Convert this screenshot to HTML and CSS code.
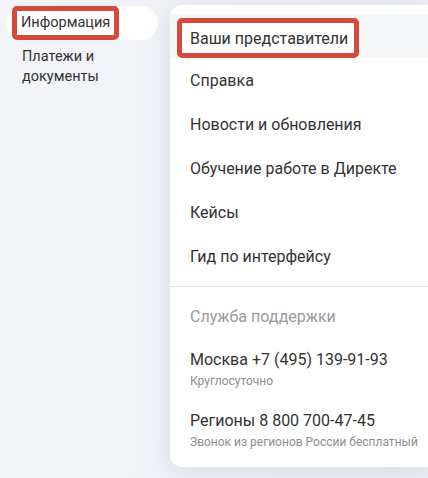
FILE: index.html
```html
<!DOCTYPE html>
<html lang="ru">
<head>
  <meta charset="UTF-8" />
  <title>Информация</title>
  <link rel="stylesheet" href="styles.css">
</head>
<body>
  <div class="page">
    <div class="sidebar">
      <div class="side-item active">
        <span class="mark">Информация</span>
      </div>
      <div class="side-item">Платежи и<br>документы</div>
    </div>

    <div class="menu">
      <div class="menu-list">
        <div class="menu-item current"><span class="mark big">Ваши представители</span></div>
        <div class="menu-item">Справка</div>
        <div class="menu-item">Новости и обновления</div>
        <div class="menu-item">Обучение работе в Директе</div>
        <div class="menu-item">Кейсы</div>
        <div class="menu-item">Гид по интерфейсу</div>
      </div>
      <div class="support">
        <div class="support-title">Служба поддержки</div>
        <div class="phone">
          <div class="phone-main">Москва +7 (495) 139-91-93</div>
          <div class="phone-note">Круглосуточно</div>
        </div>
        <div class="phone">
          <div class="phone-main">Регионы 8 800 700-47-45</div>
          <div class="phone-note">Звонок из регионов России бесплатный</div>
        </div>
      </div>
    </div>
  </div>
</body>
</html>
```

FILE: styles.css
```css
body {
  margin: 0;
  font-family: Roboto, "Noto Sans", sans-serif;
  color: #333;
  background: linear-gradient(90deg, #f3f4f8 0%, #eceff5 100%);
  height: 478px;
  overflow: hidden;
}
.page {
  display: flex;
  align-items: flex-start;
}
.sidebar {
  width: 164px;
  flex-shrink: 0;
  padding: 6px 0 0 6px;
}
.side-item {
  font-size: 14.5px;
  line-height: 20px;
  padding: 0 0 0 16px;
}
.side-item.active {
  background: #fff;
  border-radius: 17px;
  height: 34px;
  width: 152px;
  box-sizing: border-box;
  padding: 0 0 0 6px;
  display: flex;
  align-items: stretch;
  margin-bottom: 7px;
}
.mark {
  border: 5px solid #d44b3d;
  border-radius: 5px;
  background: #fff;
  padding: 0 4px;
  display: flex;
  align-items: center;
}
.menu {
  flex: 1;
  min-width: 0;
  margin-top: 5px;
  background: #fff;
  border-radius: 12px 0 0 12px;
  box-shadow: 0 4px 24px rgba(40, 60, 110, 0.12);
  padding-top: 9px;
  white-space: nowrap;
}
.menu-list {
  padding-bottom: 8px;
  border-bottom: 1px solid #e6e7ea;
}
.menu-item {
  height: 44px;
  display: flex;
  align-items: center;
  padding-left: 20px;
  font-size: 16px;
}
.menu-item.current {
  background: #f5f6f8;
  padding-left: 7px;
}
.mark.big {
  box-sizing: border-box;
  height: 40px;
  padding: 0 6px 0 8px;
  align-self: flex-end;
}
.support {
  padding: 20px 0 17px 20px;
}
.support-title {
  font-size: 16px;
  line-height: 20px;
  color: #999a9e;
  margin-bottom: 23px;
}
.phone {
  margin-bottom: 22px;
}
.phone:last-child {
  margin-bottom: 0;
}
.phone-main {
  font-size: 16px;
  line-height: 20px;
}
.phone-note {
  font-size: 12px;
  line-height: 16px;
  color: #8d8e93;
  margin-top: 3px;
}
```
